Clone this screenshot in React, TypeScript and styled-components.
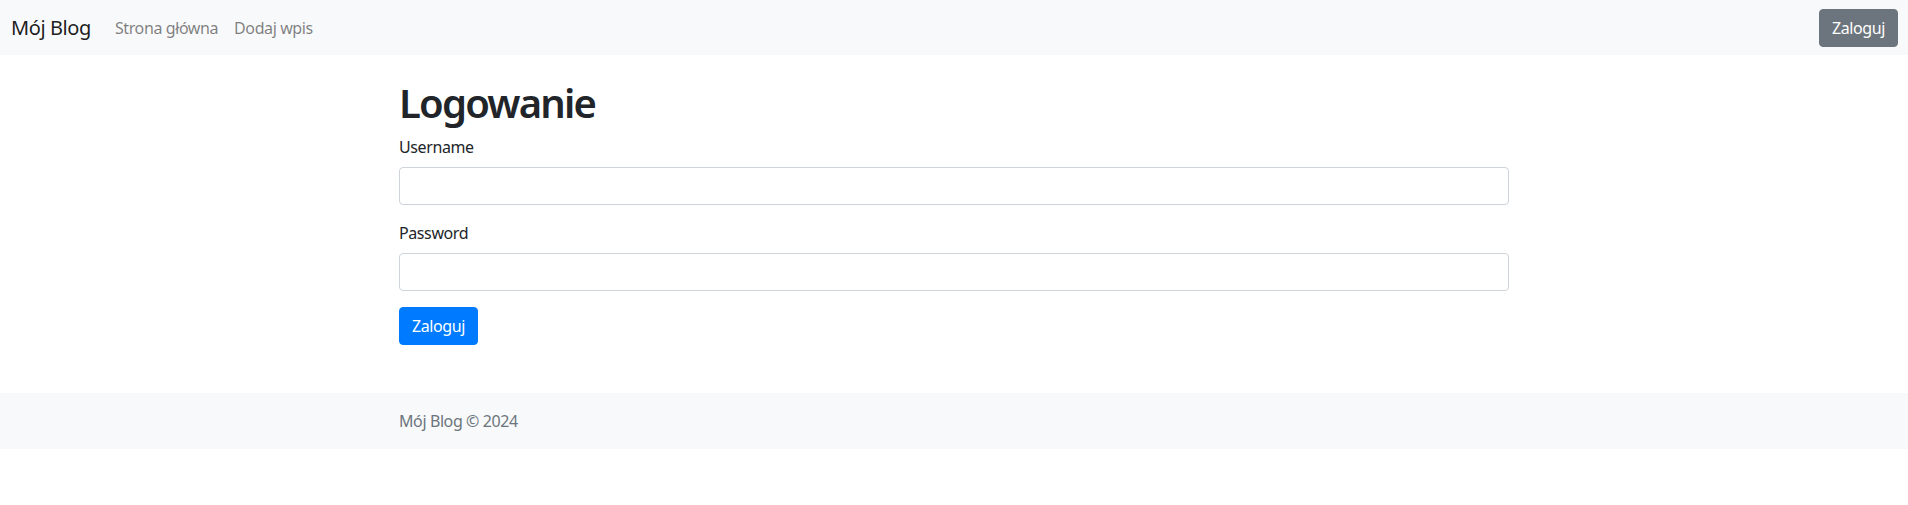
import styled, { createGlobalStyle } from "styled-components";

const GlobalStyle = createGlobalStyle`
  *, *::before, *::after { box-sizing: border-box; }
  body {
    margin: 0;
    font-family: "Noto Sans", "Open Sans", Arial, sans-serif;
    font-size: 16px;
    line-height: 1.5;
    letter-spacing: -0.025em;
    color: #212529;
    background-color: #fff;
  }
`;

const Navbar = styled.nav`
  display: flex;
  align-items: center;
  justify-content: space-between;
  height: 55px;
  padding: 0 10px 0 11px;
  background-color: #f8f9fa;
`;

const NavLeft = styled.div`
  display: flex;
  align-items: center;
`;

const Brand = styled.a`
  font-size: 20px;
  line-height: 30px;
  color: rgba(0, 0, 0, 0.9);
  text-decoration: none;
  margin-right: 16px;
`;

const NavLink = styled.a`
  padding: 8px;
  color: rgba(0, 0, 0, 0.5);
  text-decoration: none;
`;

const Button = styled.button<{ variant?: "primary" | "secondary" }>`
  font-family: inherit;
  font-size: 16px;
  line-height: 24px;
  letter-spacing: inherit;
  padding: 6px 12px;
  border-radius: 4px;
  border: 1px solid ${(p) => (p.variant === "secondary" ? "#6c757d" : "#007bff")};
  background-color: ${(p) => (p.variant === "secondary" ? "#6c757d" : "#007bff")};
  color: #fff;
  cursor: pointer;
`;

const Container = styled.main`
  width: 1110px;
  margin: 24px auto 48px;
`;

const Title = styled.h1`
  font-size: 40px;
  font-weight: 600;
  line-height: 1.2;
  letter-spacing: -0.045em;
  margin: 0 0 8px 0;
`;

const FormGroup = styled.div`
  margin-bottom: 16px;
`;

const Label = styled.label`
  display: block;
  margin-bottom: 8px;
`;

const Input = styled.input`
  display: block;
  width: 100%;
  height: 38px;
  padding: 6px 12px;
  font-family: inherit;
  font-size: 16px;
  border: 1px solid #ced4da;
  border-radius: 4px;
  color: #495057;
`;

const Footer = styled.footer`
  background-color: #f8f9fa;
  padding: 16px 0;
`;

const FooterInner = styled.div`
  width: 1110px;
  margin: 0 auto;
  color: #6c757d;
`;

export default function App() {
  return (
    <>
      <GlobalStyle />
      <Navbar>
        <NavLeft>
          <Brand href="#">Mój Blog</Brand>
          <NavLink href="#">Strona główna</NavLink>
          <NavLink href="#">Dodaj wpis</NavLink>
        </NavLeft>
        <Button variant="secondary">Zaloguj</Button>
      </Navbar>
      <Container>
        <Title>Logowanie</Title>
        <form onSubmit={(e) => e.preventDefault()}>
          <FormGroup>
            <Label htmlFor="username">Username</Label>
            <Input id="username" type="text" />
          </FormGroup>
          <FormGroup>
            <Label htmlFor="password">Password</Label>
            <Input id="password" type="password" />
          </FormGroup>
          <Button type="submit">Zaloguj</Button>
        </form>
      </Container>
      <Footer>
        <FooterInner>Mój Blog © 2024</FooterInner>
      </Footer>
    </>
  );
}
